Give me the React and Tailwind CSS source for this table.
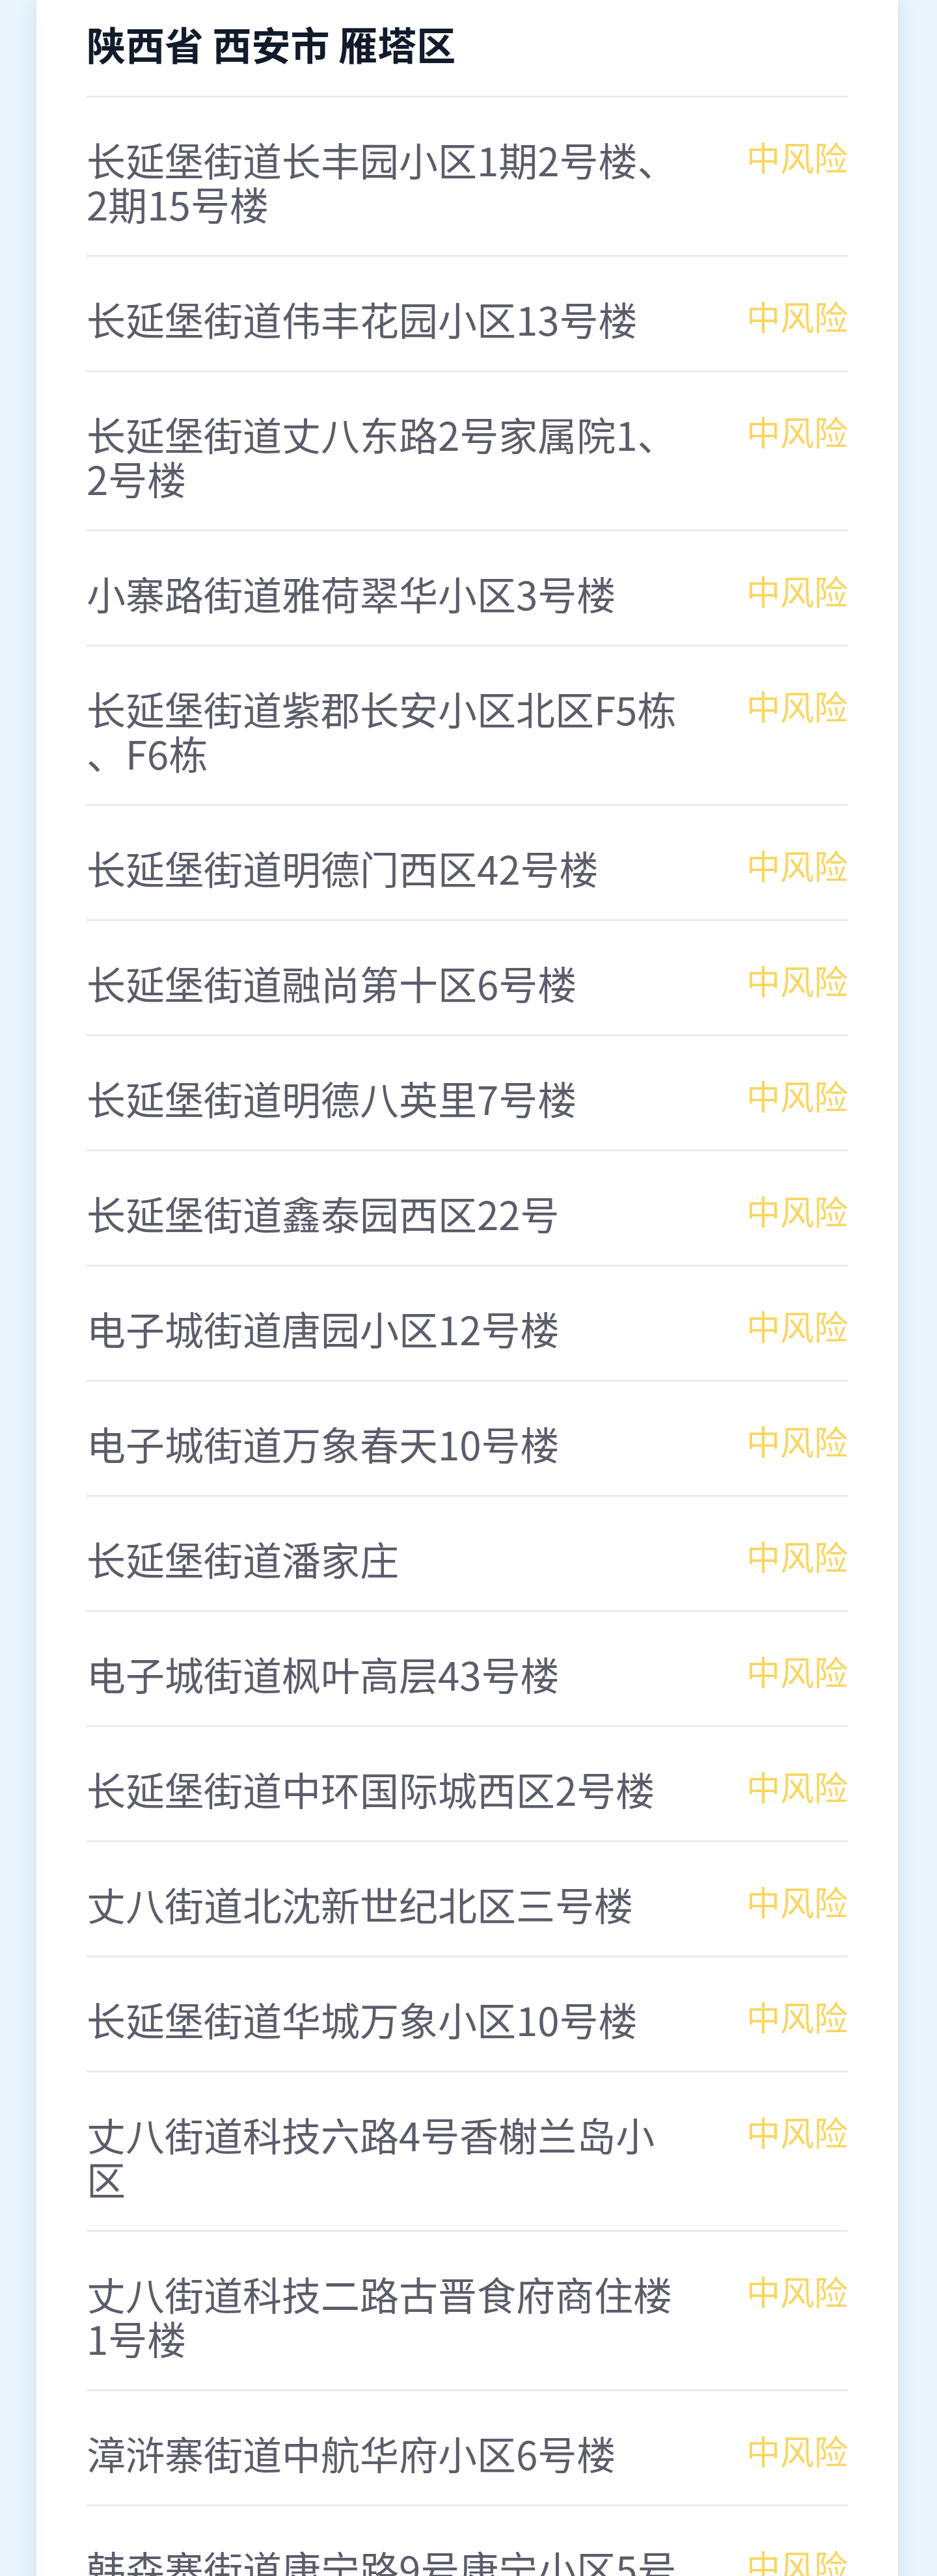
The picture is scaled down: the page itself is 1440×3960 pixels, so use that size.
import React from 'react';

const areas = [
    ['长延堡街道长丰园小区1期2号楼、', '2期15号楼'],
    ['长延堡街道伟丰花园小区13号楼'],
    ['长延堡街道丈八东路2号家属院1、', '2号楼'],
    ['小寨路街道雅荷翠华小区3号楼'],
    ['长延堡街道紫郡长安小区北区F5栋', '、F6栋'],
    ['长延堡街道明德门西区42号楼'],
    ['长延堡街道融尚第十区6号楼'],
    ['长延堡街道明德八英里7号楼'],
    ['长延堡街道鑫泰园西区22号'],
    ['电子城街道唐园小区12号楼'],
    ['电子城街道万象春天10号楼'],
    ['长延堡街道潘家庄'],
    ['电子城街道枫叶高层43号楼'],
    ['长延堡街道中环国际城西区2号楼'],
    ['丈八街道北沈新世纪北区三号楼'],
    ['长延堡街道华城万象小区10号楼'],
    ['丈八街道科技六路4号香榭兰岛小', '区'],
    ['丈八街道科技二路古晋食府商住楼', '1号楼'],
    ['漳浒寨街道中航华府小区6号楼'],
    ['韩森寨街道康宁路9号康宁小区5号', '楼'],
    ['韩森寨街道康宁路9号康宁小区6号楼'],
];

function AreaRow({ lines }) {
    return (
        <div className="flex items-start justify-between pt-[61px] pb-[45px] border-b-[3px] border-[#ebebeb]">
            <p className="w-[925px] text-[60px] leading-[68px] text-[#5b5d6b] whitespace-nowrap">
                {lines.map((l, i) => (
                    <React.Fragment key={i}>
                        {i > 0 && <br />}
                        {l}
                    </React.Fragment>
                ))}
            </p>
            <span className="shrink-0 text-[52px] leading-[60px] text-[#f8d663]">中风险</span>
        </div>
    );
}

export default function App() {
    return (
        <div
            className="h-[3960px] overflow-hidden bg-[#eaf5fc]"
            style={{ fontFamily: '"Noto Sans CJK SC", "Noto Sans", sans-serif' }}
        >
            <div className="ml-[56px] mr-[60px] bg-white px-[77px] pt-[27px] pb-20 shadow-[0_0_28px_rgba(150,180,215,0.35)]">
                <h2 className="pb-[40px] border-b-[3px] border-[#ebebeb] text-[60px] leading-[80px] font-bold text-[#111b2b]">
                    陕西省 西安市 雁塔区
                </h2>
                {areas.map((lines, i) => (
                    <AreaRow key={i} lines={lines} />
                ))}
            </div>
        </div>
    );
}
